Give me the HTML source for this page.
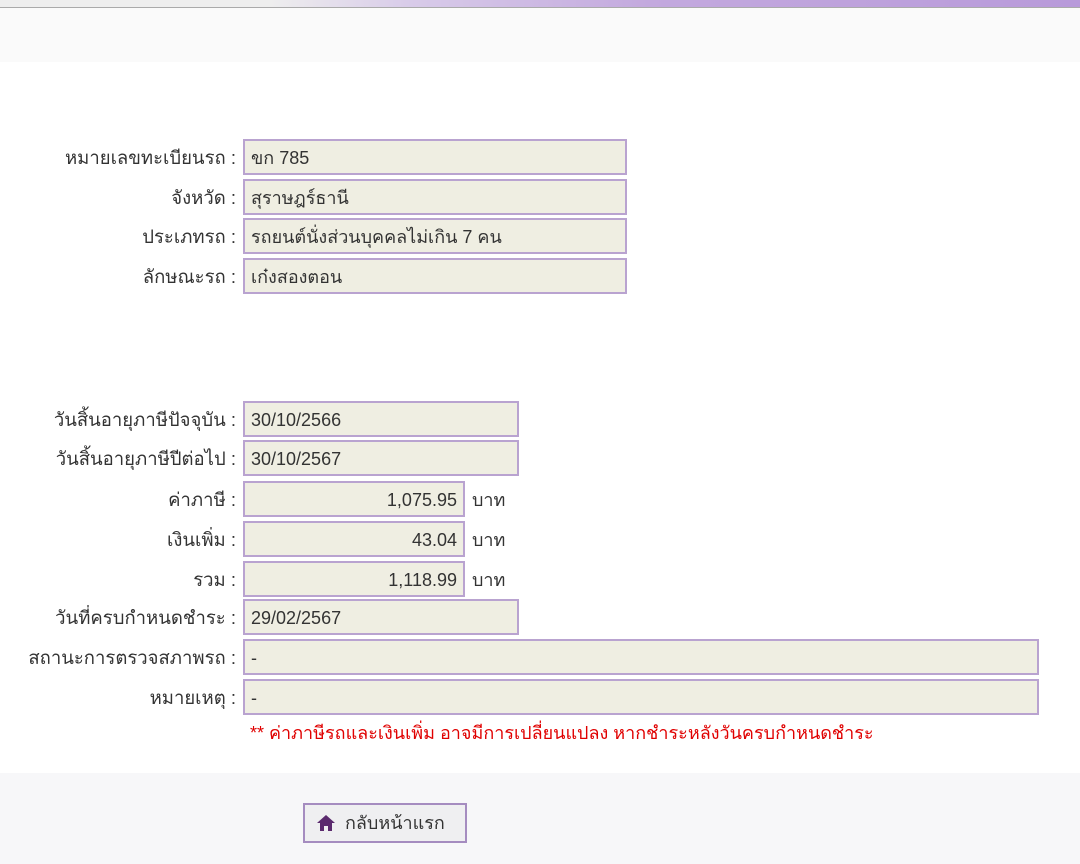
<!DOCTYPE html><html><head><meta charset="utf-8"><style>
body{margin:0;width:1080px;height:864px;position:relative;background:#fff;font-family:"Liberation Sans","DejaVu Sans",sans-serif;font-size:18px;color:#333;overflow:hidden}
.top{position:absolute;left:0;top:0;width:1080px;height:7px;background:linear-gradient(90deg,#eee 0%,#eee 25%,#d8cbe9 38%,#c3a9de 60%,#b89ada 100%);border-bottom:1px solid #aaa}
.hdr{position:absolute;left:0;top:8px;width:1080px;height:54px;background:#fafafa}
.l{position:absolute;right:844px;width:240px;text-align:right;height:36px;line-height:38px;white-space:nowrap;font-size:18.5px}
.b{position:absolute;left:243px;height:32px;line-height:34px;border:2px solid #b9a3d0;background:#efeee2;padding:0 6px;white-space:nowrap}
.r{text-align:right}
.u{position:absolute;left:472px;line-height:38px}
.foot{position:absolute;left:0;top:773px;width:1080px;height:91px;background:#f7f7f9}
.btn{position:absolute;left:303px;top:803px;width:164px;height:40px;border:2px solid #a58cc0;background:#efeff1;color:#333;line-height:36px;box-sizing:border-box}
</style></head><body>
<div class="top"></div><div class="hdr"></div>
<div class="l" style="top:139px">หมายเลขทะเบียนรถ :</div><div class="b" style="top:139px;width:368px">ขก 785</div>
<div class="l" style="top:179px">จังหวัด :</div><div class="b" style="top:179px;width:368px">สุราษฎร์ธานี</div>
<div class="l" style="top:218px">ประเภทรถ :</div><div class="b" style="top:218px;width:368px">รถยนต์นั่งส่วนบุคคลไม่เกิน 7 คน</div>
<div class="l" style="top:258px">ลักษณะรถ :</div><div class="b" style="top:258px;width:368px">เก๋งสองตอน</div>
<div class="l" style="top:401px">วันสิ้นอายุภาษีปัจจุบัน :</div><div class="b" style="top:401px;width:260px">30/10/2566</div>
<div class="l" style="top:440px">วันสิ้นอายุภาษีปีต่อไป :</div><div class="b" style="top:440px;width:260px">30/10/2567</div>
<div class="l" style="top:481px">ค่าภาษี :</div><div class="b r" style="top:481px;width:206px">1,075.95</div><div class="u" style="top:481px">บาท</div>
<div class="l" style="top:521px">เงินเพิ่ม :</div><div class="b r" style="top:521px;width:206px">43.04</div><div class="u" style="top:521px">บาท</div>
<div class="l" style="top:561px">รวม :</div><div class="b r" style="top:561px;width:206px">1,118.99</div><div class="u" style="top:561px">บาท</div>
<div class="l" style="top:599px">วันที่ครบกำหนดชำระ :</div><div class="b" style="top:599px;width:260px">29/02/2567</div>
<div class="l" style="top:639px">สถานะการตรวจสภาพรถ :</div><div class="b" style="top:639px;width:780px">-</div>
<div class="l" style="top:679px">หมายเหตุ :</div><div class="b" style="top:679px;width:780px">-</div>
<div style="position:absolute;left:250px;top:720px;color:#e00000;line-height:26px">** ค่าภาษีรถและเงินเพิ่ม อาจมีการเปลี่ยนแปลง หากชำระหลังวันครบกำหนดชำระ</div>
<div class="foot"></div>
<div class="btn"><svg style="position:absolute;left:11px;top:9px" width="20" height="18" viewBox="0 0 20 18"><path d="M10 1L1 9h3v8h4v-5h4v5h4V9h3z" fill="#5b2a6e"/></svg><span style="position:absolute;left:40px">กลับหน้าแรก</span></div>
</body></html>
